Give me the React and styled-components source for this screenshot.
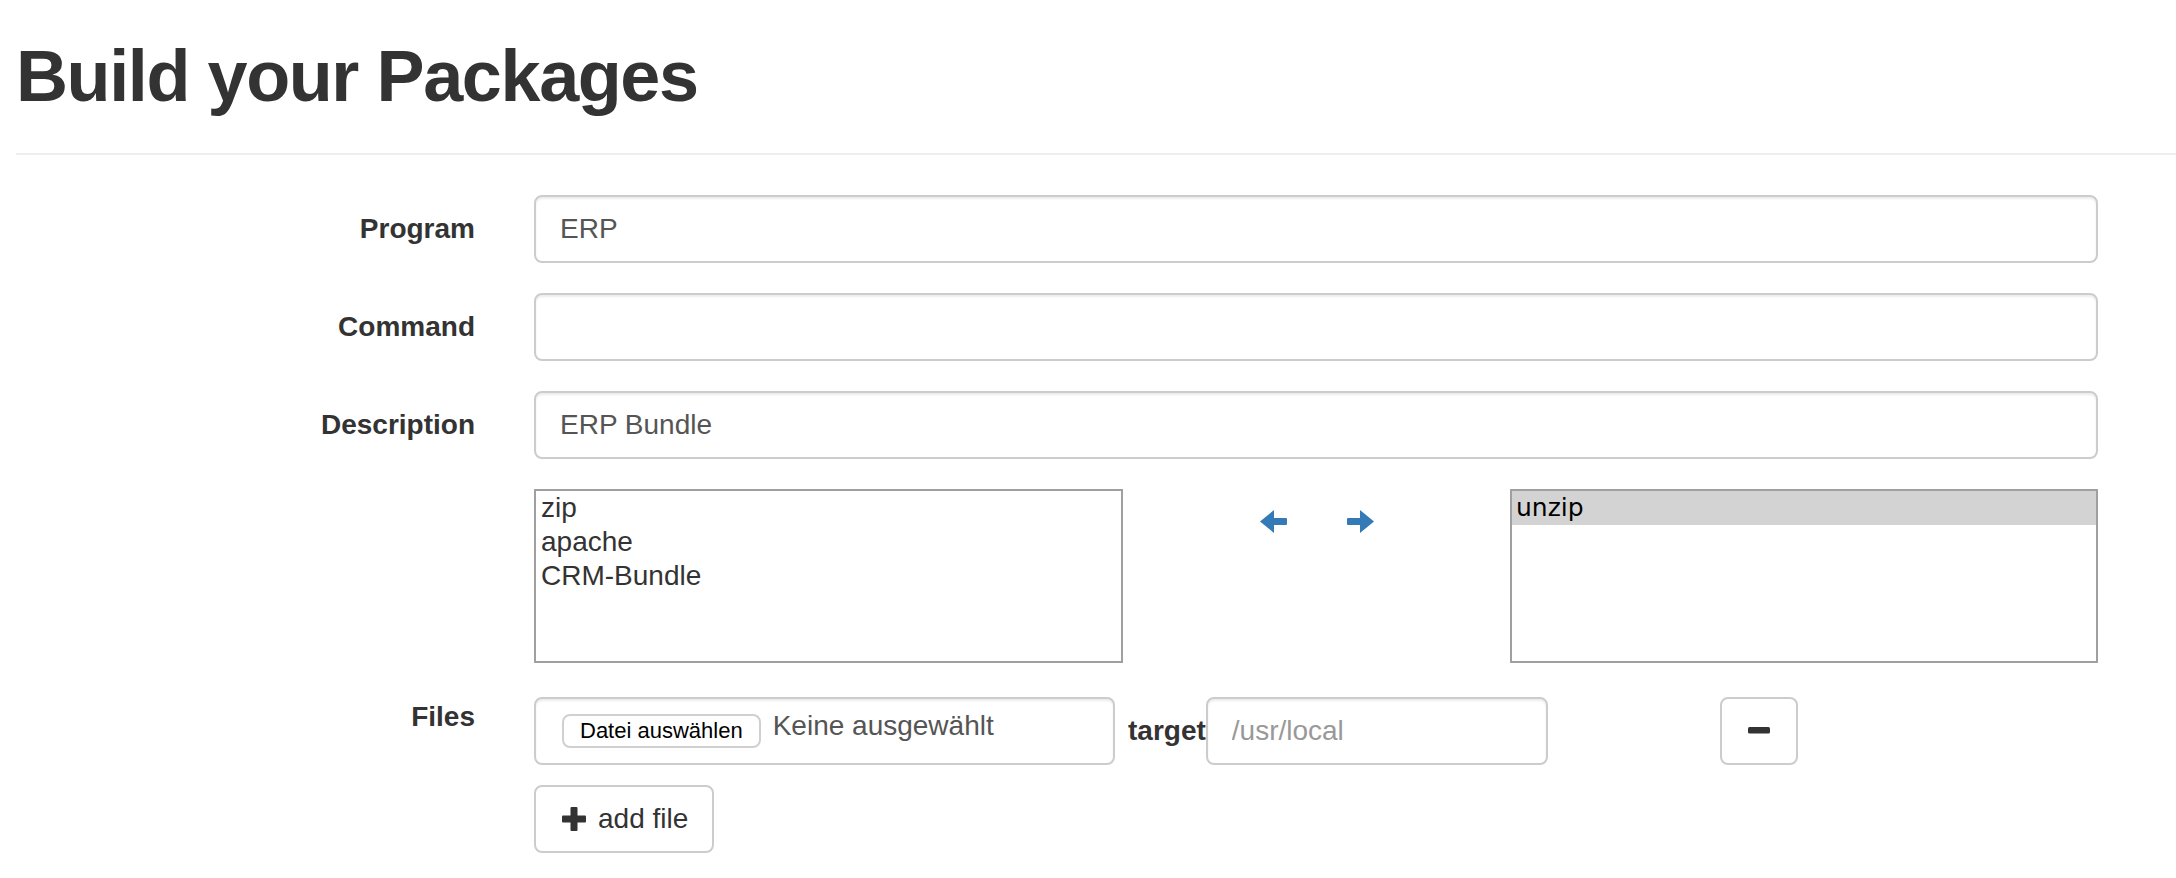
import React from 'react';
import styled, { createGlobalStyle } from 'styled-components';

const GlobalStyle = createGlobalStyle`
  body {
    margin: 0;
    background: #fff;
    color: #333;
    font-family: "Liberation Sans", Helvetica, Arial, sans-serif;
    font-size: 28px;
  }
  * { box-sizing: border-box; }
`;

const Page = styled.div`
  padding: 37px 0 0 16px;
`;

const PageHeader = styled.div`
  padding-bottom: 17px;
  margin-bottom: 40px;
  border-bottom: 2px solid #eee;
`;

const Title = styled.h1`
  margin: 0 0 20px;
  font-size: 72px;
  line-height: 79px;
  font-weight: 700;
  letter-spacing: -1.4px;
  color: #333;
`;

const FormRow = styled.div`
  display: grid;
  grid-template-columns: 459px 1564px;
  column-gap: 59px;
  margin-bottom: ${(p) => p.$gap ?? 30}px;
`;

const Label = styled.label`
  padding-top: ${(p) => (p.$flush ? 0 : 14)}px;
  font-weight: 700;
  line-height: 40px;
  text-align: right;
`;

const TextInput = styled.input`
  display: block;
  width: ${(p) => (p.$width ? `${p.$width}px` : '100%')};
  height: 68px;
  padding: 12px 24px;
  border: 2px solid #ccc;
  border-radius: 8px;
  box-shadow: inset 0 2px 2px rgba(0, 0, 0, 0.075);
  font-family: inherit;
  font-size: 28px;
  line-height: 40px;
  color: #555;
  background: #fff;
  outline: none;

  &::placeholder {
    color: #999;
  }
`;

const PickerGrid = styled.div`
  display: grid;
  grid-template-columns: 589px 1fr 588px;
`;

const ListBox = styled.div`
  height: 174px;
  border: 2px solid #a0a0a0;
  background: #fff;
  overflow: hidden;
`;

const ListOption = styled.div`
  height: 34px;
  padding: 0 ${(p) => (p.$selected ? 4 : 5)}px;
  font-family: ${(p) => (p.$selected ? '"DejaVu Sans", sans-serif' : 'inherit')};
  font-size: ${(p) => (p.$selected ? 25 : 28)}px;
  line-height: 34px;
  color: ${(p) => (p.$selected ? '#000' : '#333')};
  background: ${(p) => (p.$selected ? '#d3d3d3' : 'transparent')};
  white-space: nowrap;
`;

const MoveButtons = styled.div`
  display: flex;
  justify-content: center;
  align-items: flex-start;
  gap: 60px;
  padding-top: 21px;
`;

const MoveButton = styled.button`
  display: block;
  padding: 0;
  border: 0;
  background: none;
  cursor: pointer;
  color: #337ab7;
`;

const FileLine = styled.div`
  display: flex;
  align-items: flex-start;
`;

const FileBox = styled.div`
  display: flex;
  align-items: flex-start;
  width: 581px;
  height: 68px;
  padding: 12px 26px;
  margin-right: 13px;
  border: 2px solid #ccc;
  border-radius: 8px;
  box-shadow: inset 0 2px 2px rgba(0, 0, 0, 0.075);
`;

const ChooseButton = styled.span`
  height: 34px;
  margin-top: 3px;
  padding: 0 16px;
  border: 2px solid #d0d0d0;
  border-radius: 8px;
  background: #fff;
  font-size: 22px;
  line-height: 30px;
  color: #000;
  white-space: nowrap;
`;

const NoFile = styled.span`
  margin-left: 12px;
  line-height: 30px;
  color: #555;
  white-space: nowrap;
`;

const InlineLabel = styled.label`
  font-weight: 700;
  line-height: 68px;
`;

const Button = styled.button`
  display: inline-flex;
  align-items: center;
  gap: 12px;
  height: 68px;
  margin-left: ${(p) => p.$offset ?? 0}px;
  padding: 0 24px;
  border: 2px solid #ccc;
  border-radius: 8px;
  background: #fff;
  color: #333;
  font-family: inherit;
  font-size: 28px;
  line-height: 40px;
  cursor: pointer;
`;

const ArrowLeft = () => (
  <svg width="27" height="23" viewBox="0 0 27 23">
    <path d="M0 11.5 L14 0 V8 H26 Q27 8 27 9 V14 Q27 15 26 15 H14 V23 Z" fill="currentColor" />
  </svg>
);

const ArrowRight = () => (
  <svg width="27" height="23" viewBox="0 0 27 23">
    <path d="M27 11.5 L13 0 V8 H1 Q0 8 0 9 V14 Q0 15 1 15 H13 V23 Z" fill="currentColor" />
  </svg>
);

const PlusIcon = () => (
  <svg width="26" height="24" viewBox="0 0 26 24">
    <rect x="10.5" y="0" width="7" height="24" rx="1" fill="#333" />
    <rect x="2" y="8.5" width="24" height="7" rx="1" fill="#333" />
  </svg>
);

const MinusIcon = () => (
  <svg width="26" height="26" viewBox="0 0 26 26">
    <rect x="2" y="9" width="22" height="6.5" rx="1.5" fill="#333" />
  </svg>
);

const available = ['zip', 'apache', 'CRM-Bundle'];
const chosen = ['unzip'];

export default function App() {
  return (
    <Page>
      <GlobalStyle />
      <PageHeader>
        <Title>Build your Packages</Title>
      </PageHeader>

      <form onSubmit={(e) => e.preventDefault()}>
        <FormRow>
          <Label>Program</Label>
          <TextInput defaultValue="ERP" />
        </FormRow>
        <FormRow>
          <Label>Command</Label>
          <TextInput defaultValue="" />
        </FormRow>
        <FormRow>
          <Label>Description</Label>
          <TextInput defaultValue="ERP Bundle" />
        </FormRow>

        <FormRow $gap={34}>
          <div />
          <PickerGrid>
            <ListBox>
              {available.map((name) => (
                <ListOption key={name}>{name}</ListOption>
              ))}
            </ListBox>
            <MoveButtons>
              <MoveButton type="button" aria-label="remove dependency">
                <ArrowLeft />
              </MoveButton>
              <MoveButton type="button" aria-label="add dependency">
                <ArrowRight />
              </MoveButton>
            </MoveButtons>
            <ListBox>
              {chosen.map((name, i) => (
                <ListOption key={name} $selected={i === 0}>{name}</ListOption>
              ))}
            </ListBox>
          </PickerGrid>
        </FormRow>

        <FormRow $gap={20}>
          <Label $flush>Files</Label>
          <FileLine>
            <FileBox>
              <ChooseButton>Datei auswählen</ChooseButton>
              <NoFile>Keine ausgewählt</NoFile>
            </FileBox>
            <InlineLabel>target</InlineLabel>
            <TextInput $width={342} placeholder="/usr/local" />
            <Button type="button" $offset={172} aria-label="remove file">
              <MinusIcon />
            </Button>
          </FileLine>
        </FormRow>

        <FormRow>
          <div />
          <div>
            <Button type="button">
              <PlusIcon />
              add file
            </Button>
          </div>
        </FormRow>
      </form>
    </Page>
  );
}
